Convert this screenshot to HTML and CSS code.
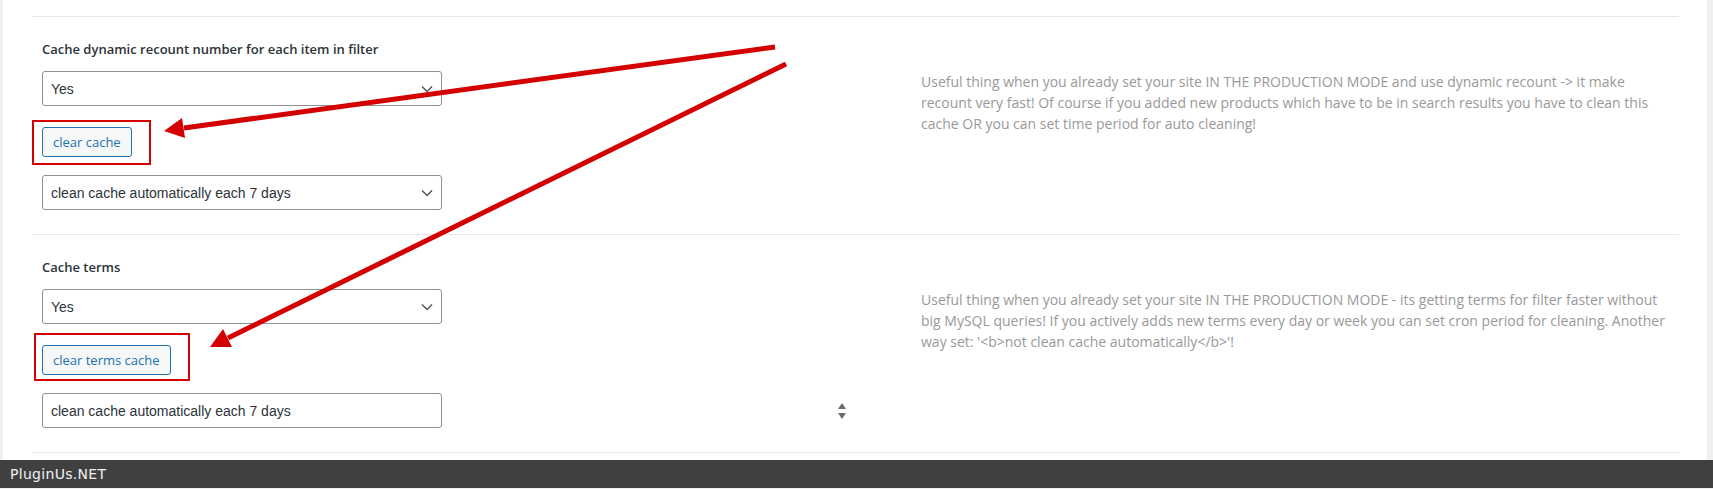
FILE: index.html
```html
<!DOCTYPE html>
<html lang="en">
<head>
  <meta charset="UTF-8" />
  <meta name="viewport" content="width=device-width, initial-scale=1.0" />
  <title>Cache options</title>
  <link rel="stylesheet" href="styles.css">
</head>
<body>
  <div class="page">
    <div class="options">
      <div class="option">
        <div class="option-field">
          <div class="option-title">Cache dynamic recount number for each item in filter</div>
          <select class="select">
            <option>Yes</option>
            <option>No</option>
          </select>
          <div class="button-row">
            <span class="marked marked-first">
              <button class="button">clear cache</button>
            </span>
          </div>
          <select class="select">
            <option>clean cache automatically each 7 days</option>
          </select>
        </div>
        <div class="option-desc">
          Useful thing when you already set your site IN THE PRODUCTION MODE and use dynamic recount -&gt; it make recount very fast! Of course if you added new products which have to be in search results you have to clean this cache OR you can set time period for auto cleaning!
        </div>
      </div>

      <div class="option">
        <div class="option-field">
          <div class="option-title">Cache terms</div>
          <select class="select">
            <option>Yes</option>
            <option>No</option>
          </select>
          <div class="button-row">
            <span class="marked marked-second">
              <button class="button">clear terms cache</button>
            </span>
          </div>
          <div class="input-row">
            <input type="text" class="input" value="clean cache automatically each 7 days">
            <svg class="spinner" width="10" height="18" viewBox="0 0 10 18">
              <polygon points="5,1 9,7 1,7" fill="#6b6b6b"/>
              <polygon points="1,11 9,11 5,17" fill="#6b6b6b"/>
            </svg>
          </div>
        </div>
        <div class="option-desc">
          Useful thing when you already set your site IN THE PRODUCTION MODE - its getting terms for filter faster without big MySQL queries! If you actively adds new terms every day or week you can set cron period for cleaning. Another way set: '&lt;b&gt;not clean cache automatically&lt;/b&gt;'!
        </div>
      </div>
    </div>
  </div>

  <div class="footer">PluginUs.NET</div>

  <!-- annotation arrows drawn over the page -->
  <svg class="arrows" width="1713" height="489" viewBox="0 0 1713 489">
    <line x1="775" y1="47" x2="184" y2="128" stroke="#d40000" stroke-width="5"/>
    <polygon points="164,131 182,118 185,138" fill="#d40000"/>
    <line x1="786" y1="64" x2="228" y2="338" stroke="#d40000" stroke-width="5"/>
    <polygon points="210,347 223,329 232,347" fill="#d40000"/>
  </svg>
</body>
</html>
```

FILE: styles.css
```css
html, body {
  margin: 0;
  padding: 0;
}
body {
  background-color: #f0f0f1;
  font-family: "Open Sans", "Noto Sans", sans-serif;
  position: relative;
  height: 489px;
  overflow: hidden;
}
.page {
  background-color: #fff;
  margin: 0 6px 0 3px;
  padding: 16px 28px 7px 29px;
}
.option {
  display: flex;
  border-top: 1px solid #e4e7ea;
}
.option:last-child {
  border-bottom: 1px solid #e4e7ea;
}
.option-field {
  width: 400px;
  flex: none;
  padding: 23px 479px 24px 10px;
}
.option-title {
  font-size: 13px;
  font-weight: 600;
  line-height: 18px;
  color: #2c3338;
  margin-bottom: 13px;
}
.select,
.input {
  display: block;
  box-sizing: border-box;
  width: 400px;
  height: 35px;
  margin: 0;
  padding: 0 24px 0 8px;
  border: 1px solid #8c8f94;
  border-radius: 3px;
  background-color: #fff;
  color: #2c3338;
  font-family: "Liberation Sans", Arial, sans-serif;
  font-size: 14px;
  outline: none;
}
.select {
  appearance: none;
  -webkit-appearance: none;
  background-image: url("data:image/svg+xml;utf8,<svg xmlns='http://www.w3.org/2000/svg' width='12' height='8' viewBox='0 0 12 8'><path d='M1 1.5l5 5 5-5' fill='none' stroke='%2350575e' stroke-width='1.5'/></svg>");
  background-repeat: no-repeat;
  background-position: right 8px center;
}
.button-row {
  margin: 21px 0 18px;
}
.marked {
  display: inline-block;
  position: relative;
}
.marked::after {
  content: "";
  position: absolute;
  border: 2px solid #d40000;
  pointer-events: none;
}
.marked-first::after {
  top: -7px;
  left: -10px;
  right: -19px;
  bottom: -8px;
}
.marked-second::after {
  top: -12px;
  left: -8px;
  right: -19px;
  bottom: -6px;
}
.button {
  display: block;
  height: 30px;
  padding: 0 10px;
  border: 1px solid #2271b1;
  border-radius: 3px;
  background-color: #f6f7f7;
  color: #2271b1;
  font-family: "Open Sans", "Noto Sans", sans-serif;
  font-size: 13px;
  cursor: pointer;
}
.input-row {
  display: flex;
  align-items: center;
}
.input {
  flex: none;
  padding-right: 8px;
}
.spinner {
  margin-left: 395px;
  flex: none;
}
.option-desc {
  flex: 1;
  padding-top: 54px;
  font-size: 14px;
  line-height: 21px;
  color: #999;
}
.footer {
  height: 28px;
  line-height: 28px;
  padding-left: 10px;
  background-color: #404040;
  color: #f0f0f0;
  font-family: "DejaVu Sans", sans-serif;
  font-size: 14px;
  letter-spacing: 0.3px;
}
.arrows {
  position: absolute;
  top: 0;
  left: 0;
  pointer-events: none;
}
```
